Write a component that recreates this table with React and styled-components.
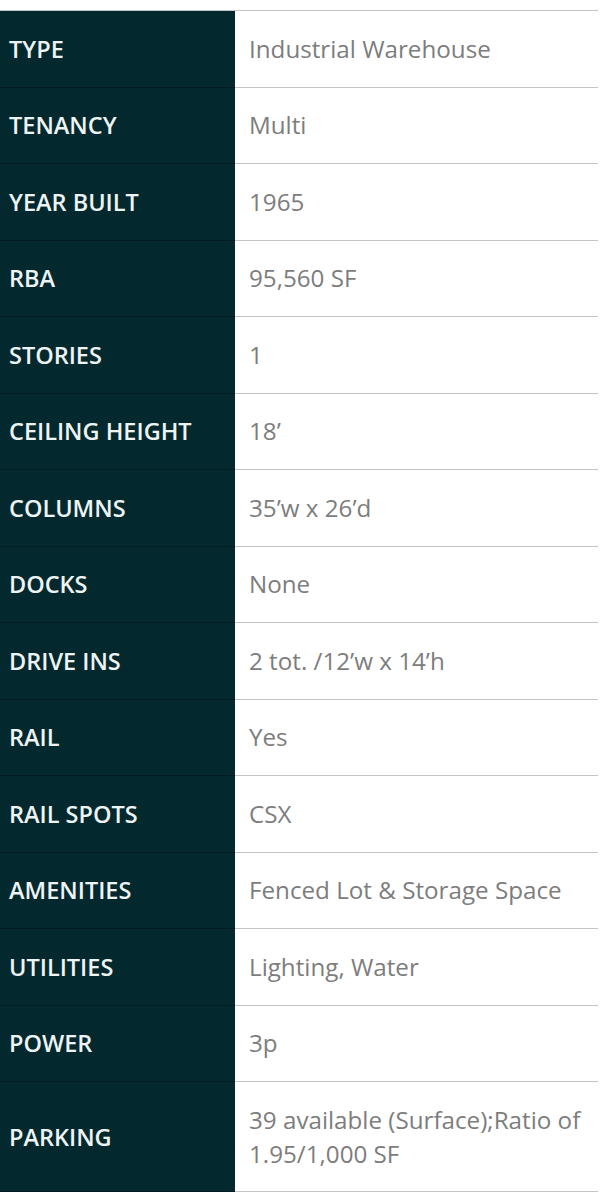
import React from "react";
import styled, { createGlobalStyle } from "styled-components";

const GlobalStyle = createGlobalStyle`
  body {
    margin: 0;
    background: #ffffff;
    font-family: "Open Sans", "Liberation Sans", sans-serif;
  }
`;

const specs = [
  { label: "TYPE", value: "Industrial Warehouse" },
  { label: "TENANCY", value: "Multi" },
  { label: "YEAR BUILT", value: "1965" },
  { label: "RBA", value: "95,560 SF" },
  { label: "STORIES", value: "1" },
  { label: "CEILING HEIGHT", value: "18’" },
  { label: "COLUMNS", value: "35’w x 26’d" },
  { label: "DOCKS", value: "None" },
  { label: "DRIVE INS", value: "2 tot. /12’w x 14’h" },
  { label: "RAIL", value: "Yes" },
  { label: "RAIL SPOTS", value: "CSX" },
  { label: "AMENITIES", value: "Fenced Lot & Storage Space" },
  { label: "UTILITIES", value: "Lighting, Water" },
  { label: "POWER", value: "3p" },
  { label: "PARKING", value: "39 available (Surface);Ratio of 1.95/1,000 SF", tall: true },
];

const Page = styled.div`
  padding: 10px 0 8px 0;
`;

const Table = styled.div`
  width: 598px;
  display: grid;
  grid-template-columns: 235px 1fr;
  border-top: 1.5px solid #c4c4c4;
`;

const Label = styled.div`
  box-sizing: border-box;
  height: ${(p) => (p.$tall ? "110px" : "76.5px")};
  background: #03292e;
  border-bottom: 1px solid #011d21;
  display: flex;
  align-items: center;
  padding-left: 9px;
  color: #eef4f3;
  font-size: 23.5px;
  font-weight: 600;
`;

const Value = styled.div`
  box-sizing: border-box;
  height: ${(p) => (p.$tall ? "110px" : "76.5px")};
  border-bottom: 1.5px solid #c4c4c4;
  display: flex;
  align-items: center;
  padding: 0 6px 0 14px;
  color: #7d7d7d;
  font-size: 24.2px;
  line-height: 34px;
`;

export default function App() {
  return (
    <Page>
      <GlobalStyle />
      <Table>
        {specs.map((row) => (
          <React.Fragment key={row.label}>
            <Label $tall={row.tall}>{row.label}</Label>
            <Value $tall={row.tall}>{row.value}</Value>
          </React.Fragment>
        ))}
      </Table>
    </Page>
  );
}
